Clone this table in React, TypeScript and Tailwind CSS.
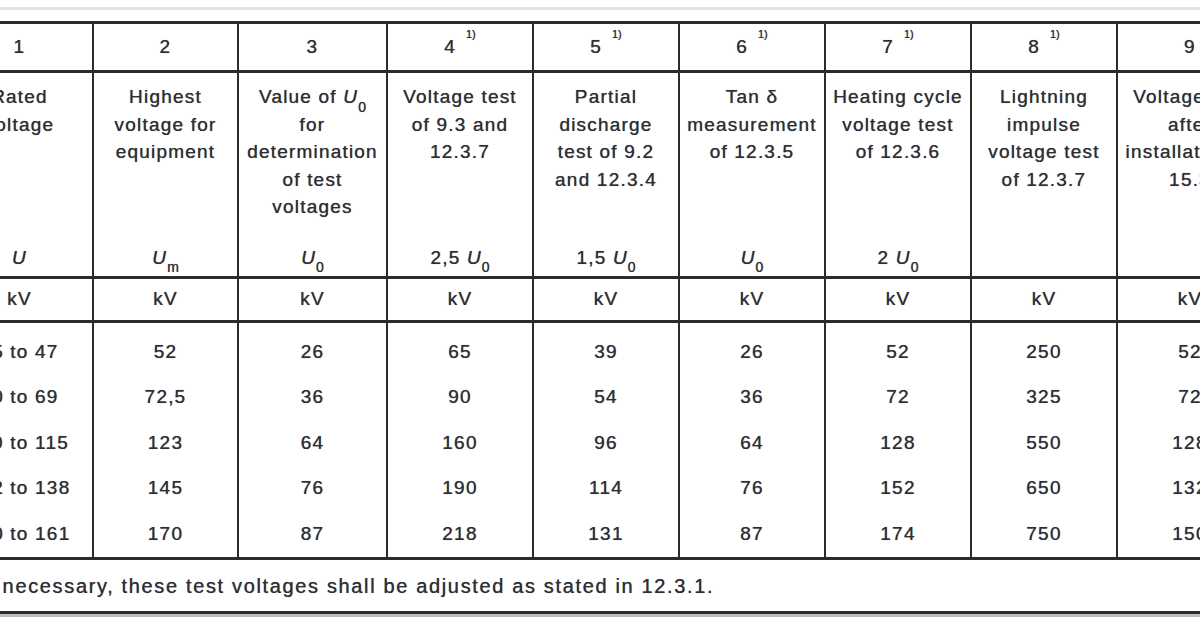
import React from "react";

const COLS = "grid grid-cols-[145px_143px_147px_144px_144px_144px_144px_144px_144px] gap-x-[2px]";

function U({ sub }: { sub?: string }) {
  return (
    <span>
      <i>U</i>
      {sub ? <sub className="text-[14px] not-italic align-[-5px] tracking-normal">{sub}</sub> : null}
    </span>
  );
}

const heads: { num: string; sup?: boolean; lines: React.ReactNode[]; sym?: React.ReactNode }[] = [
  { num: "1", lines: ["Rated", "voltage"], sym: <U /> },
  { num: "2", lines: ["Highest", "voltage for", "equipment"], sym: <U sub="m" /> },
  {
    num: "3",
    lines: [
      <span key="a">
        Value of <U sub="0" />
      </span>,
      "for",
      "determination",
      "of test",
      "voltages",
    ],
    sym: <U sub="0" />,
  },
  {
    num: "4",
    sup: true,
    lines: ["Voltage test", "of 9.3 and", "12.3.7"],
    sym: (
      <span>
        2,5 <U sub="0" />
      </span>
    ),
  },
  {
    num: "5",
    sup: true,
    lines: ["Partial", "discharge", "test of 9.2", "and 12.3.4"],
    sym: (
      <span>
        1,5 <U sub="0" />
      </span>
    ),
  },
  { num: "6", sup: true, lines: ["Tan δ", "measurement", "of 12.3.5"], sym: <U sub="0" /> },
  {
    num: "7",
    sup: true,
    lines: ["Heating cycle", "voltage test", "of 12.3.6"],
    sym: (
      <span>
        2 <U sub="0" />
      </span>
    ),
  },
  { num: "8", sup: true, lines: ["Lightning", "impulse", "voltage test", "of 12.3.7"] },
  { num: "9", lines: ["Voltage test", "after", "installation of", "15.3"] },
];

const data: string[][] = [
  ["45 to 47", "52", "26", "65", "39", "26", "52", "250", "52"],
  ["60 to 69", "72,5", "36", "90", "54", "36", "72", "325", "72"],
  ["110 to 115", "123", "64", "160", "96", "64", "128", "550", "128"],
  ["132 to 138", "145", "76", "190", "114", "76", "152", "650", "132"],
  ["150 to 161", "170", "87", "218", "131", "87", "174", "750", "150"],
];

export default function App() {
  return (
    <div
      className="w-[1200px] h-[630px] overflow-hidden bg-white text-[#2e2e34] [text-shadow:0_0_0.7px_#55555c]"
      style={{ fontFamily: '"Liberation Sans", Arial, sans-serif' }}
    >
      <div className="h-[7px]" />
      <div className="h-[3px] bg-[#e2e2e2]" />
      <div className="h-[11px]" />
      <div className="ml-[-53px] w-[1326px] bg-[#2c2c2c] py-[3px] flex flex-col gap-y-[3px] text-[19px] tracking-[1.2px]">
        <div className={COLS}>
          {heads.map((h) => (
            <div key={h.num} className="bg-white h-[46px] flex items-center justify-center">
              <span>
                {h.num}
                {h.sup ? (
                  <sup className="text-[11px] ml-[10px] align-[9px] tracking-normal">1)</sup>
                ) : null}
              </span>
            </div>
          ))}
        </div>
        <div className={COLS}>
          {heads.map((h) => (
            <div
              key={h.num}
              className="bg-white h-[203px] flex flex-col justify-between items-center text-center leading-[27.5px] pt-[10px] pb-[5px]"
            >
              <div className="flex flex-col items-center whitespace-nowrap">
                {h.lines.map((l, i) => (
                  <div key={i}>{l}</div>
                ))}
              </div>
              <div className="whitespace-nowrap">{h.sym}</div>
            </div>
          ))}
        </div>
        <div className={COLS}>
          {heads.map((h) => (
            <div key={h.num} className="bg-white h-[41px] flex items-center justify-center">
              kV
            </div>
          ))}
        </div>
        <div className={COLS}>
          {heads.map((h, c) => (
            <div key={h.num} className="bg-white h-[234px] pt-[6px] flex flex-col">
              {data.map((r, i) => (
                <div key={i} className="h-[46.3px] flex items-center justify-center whitespace-nowrap">
                  {r[c]}
                </div>
              ))}
            </div>
          ))}
        </div>
        <div className="bg-white h-[51px] flex items-center pl-[34px] text-[20px] tracking-[1.65px] whitespace-nowrap">
          If necessary, these test voltages shall be adjusted as stated in 12.3.1.
        </div>
      </div>
      <div className="h-[3px] bg-[#bdbdbd]" />
    </div>
  );
}
